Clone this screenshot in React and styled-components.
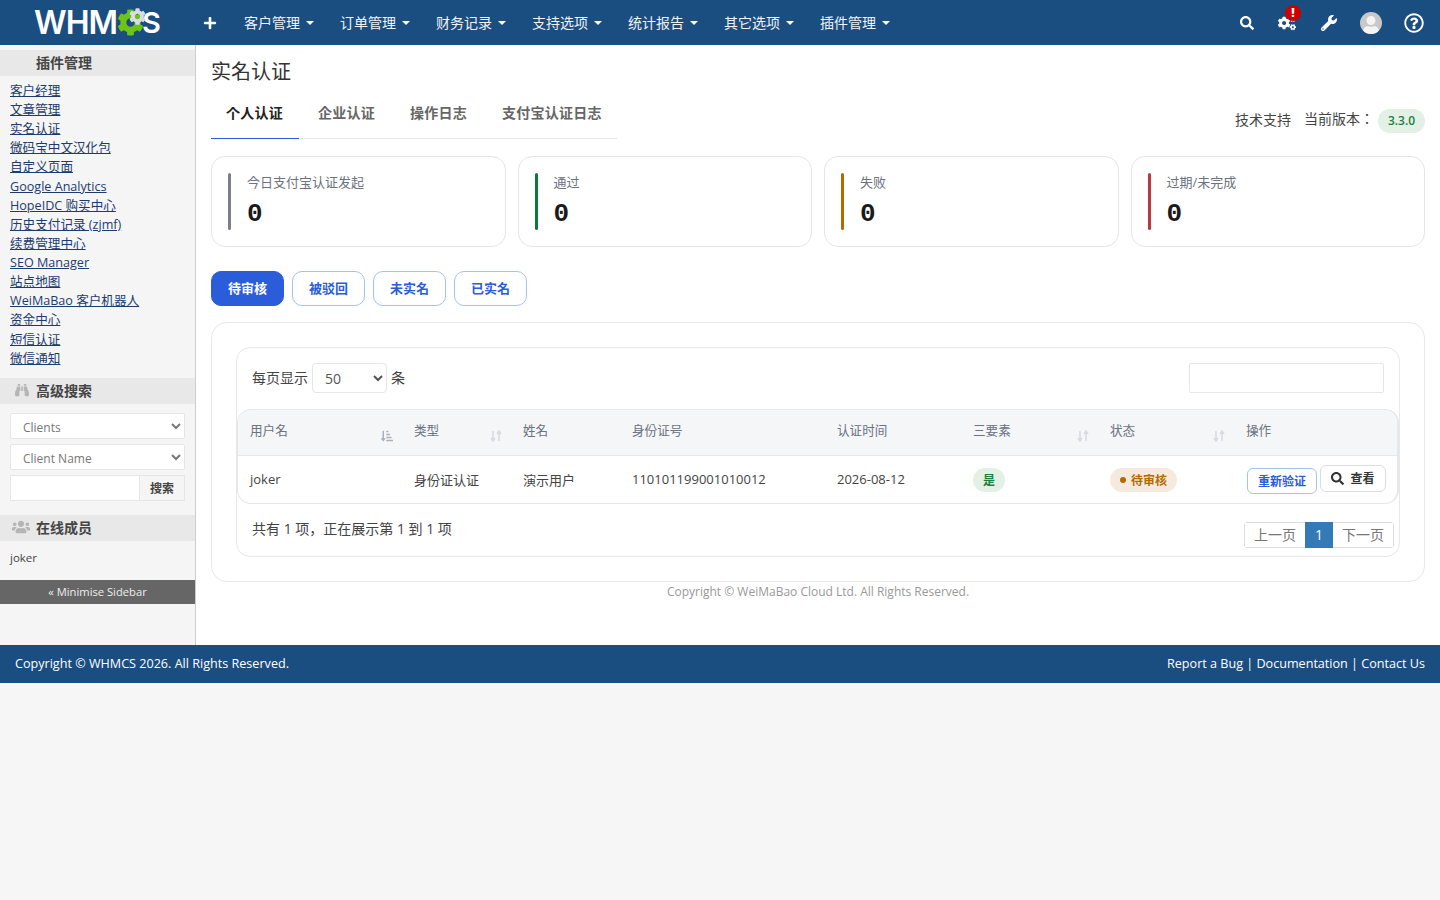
import React from "react";
import styled, { createGlobalStyle } from "styled-components";
import {
  FaPlus,
  FaSearch,
  FaCogs,
  FaCog,
  FaWrench,
  FaRegQuestionCircle,
  FaBinoculars,
  FaUsers,
  FaUser,
  FaSortAmountDownAlt,
} from "react-icons/fa";

const sans = `"Open Sans", "Noto Sans CJK JP", sans-serif`;

const GlobalStyle = createGlobalStyle`
  html, body {
    margin: 0;
    padding: 0;
    background: #f6f6f6;
    font-family: ${sans};
    font-size: 14px;
    color: #333;
  }
  * { box-sizing: border-box; }
`;

/* top bar */
const TopBar = styled.header`
  height: 45px;
  background: #1a4d80;
  display: flex;
  align-items: center;
  color: #fff;
`;

const Logo = styled.div`
  position: relative;
  width: 196px;
  height: 45px;
  padding: 4px 0 0 34px;
  display: flex;
  font-family: Inter, sans-serif;
  font-size: 32px;
  font-weight: 600;
  line-height: 38px;
  letter-spacing: -1px;
`;

const LogoGap = styled.span`
  width: 25px;
`;

const LogoTail = styled.span`
  font-size: 29px;
`;

const LogoGear = styled.span`
  position: absolute;
  left: ${(p) => p.$left}px;
  top: ${(p) => p.$top}px;
  color: ${(p) => p.$color};
  font-size: ${(p) => p.$size}px;
  line-height: 0;
`;

const PlusLink = styled.span`
  width: 35px;
  display: flex;
  justify-content: center;
  font-size: 14px;
  margin-left: -4px;
`;

const NavMenu = styled.nav`
  display: flex;
  padding: 0 0 2px 4px;
`;

const NavItem = styled.span`
  width: 96px;
  padding-left: 13px;
  display: flex;
  align-items: center;
  gap: 6px;
  font-size: 14px;
  color: #f0f3f7;
`;

const Caret = styled.i`
  width: 0;
  height: 0;
  border-left: 4px solid transparent;
  border-right: 4px solid transparent;
  border-top: 4px solid #fff;
  margin-top: 2px;
`;

const TopIcons = styled.div`
  margin-left: auto;
  padding-right: 3px;
  display: flex;
  align-items: center;
  font-size: 16px;
`;

const TopIcon = styled.span`
  position: relative;
  display: flex;
  justify-content: center;
  align-items: center;
  width: ${(p) => p.$w}px;
  font-size: ${(p) => p.$size || 16}px;
`;

const AlertBadge = styled.b`
  position: absolute;
  top: -9px;
  left: 18px;
  width: 16px;
  height: 16px;
  border-radius: 50%;
  background: #cc0000;
  font-size: 12px;
  line-height: 16px;
  font-weight: 800;
  text-align: center;
  color: #fff;
`;

const Avatar = styled.span`
  width: 22px;
  height: 22px;
  border-radius: 50%;
  background: #c8c8c8;
  overflow: hidden;
  display: flex;
  justify-content: center;
  align-items: flex-end;
  color: #f4f4f4;
  font-size: 18px;
  line-height: 0;
`;

/* page frame */
const Frame = styled.div`
  display: flex;
  height: 600px;
`;

const Sidebar = styled.aside`
  width: 196px;
  flex: none;
  background: #f5f5f5;
  border-right: 1px solid #ccc;
  padding-top: 5px;
`;

const SideHeader = styled.h3`
  margin: 0;
  height: 26px;
  padding-bottom: 2px;
  background: #e8e8e8;
  display: flex;
  align-items: center;
  font-size: 14px;
  font-weight: 700;
  color: #444;
`;

const SideIcon = styled.span`
  width: 36px;
  display: flex;
  justify-content: center;
  padding-left: ${(p) => p.$pad ?? 7}px;
  color: #b5b5b5;
  font-size: ${(p) => p.$size || 14}px;
`;

const SideLinks = styled.div`
  padding: 4.9px 10px 10.3px;
  display: flex;
  flex-direction: column;
`;

const SideLink = styled.a`
  height: 19.13px;
  line-height: 19px;
  font-size: 12.6px;
  color: #1c3c6e;
  text-decoration: underline;
  white-space: nowrap;
`;

const SideForm = styled.div`
  padding: 9px 10px 14px;
  display: flex;
  flex-direction: column;
  gap: 5px;
`;

const SideSelect = styled.select`
  width: 175px;
  height: 26px;
  border: 1px solid #e6e6e6;
  border-radius: 2px;
  background: #fff;
  padding: 2px 0 0 8px;
  font-family: ${sans};
  font-size: 12px;
  color: #777;
`;

const SideSearch = styled.div`
  display: flex;
  height: 26px;
`;

const SideInput = styled.input`
  width: 130px;
  border: 1px solid #e6e6e6;
  background: #fff;
  padding: 0;
`;

const SideButton = styled.button`
  width: 45px;
  border: 1px solid #e6e6e6;
  border-left: 0;
  background: #f5f5f5;
  padding: 0;
  font-family: ${sans};
  font-size: 12px;
  font-weight: 700;
  color: #444;
`;

const OnlineName = styled.div`
  padding: 9px 10px 14px;
  font-size: 11.5px;
  line-height: 16px;
  color: #444;
`;

const MinimiseBar = styled.div`
  height: 24px;
  background: #666;
  color: #eee;
  font-size: 11.2px;
  line-height: 24px;
  text-align: center;
`;

/* main content */
const Main = styled.main`
  flex: 1;
  min-width: 0;
  background: #fff;
  padding: 12px 15px 0;
`;

const Title = styled.h1`
  margin: 0;
  height: 29px;
  font-size: 20px;
  line-height: 29px;
  font-weight: 400;
  color: #333;
`;

const TabRow = styled.div`
  display: flex;
  align-items: flex-end;
  justify-content: space-between;
  margin-top: 10px;
`;

const Tabs = styled.div`
  width: 406px;
  height: 43px;
  display: flex;
  gap: 4px;
  border-bottom: 1px solid #e5e5e5;
`;

const Tab = styled.span`
  height: 43px;
  padding: 0 16px 0 15px;
  font-size: 14px;
  letter-spacing: 0.25px;
  line-height: 33px;
  font-weight: 700;
  color: ${(p) => (p.$active ? "#222" : "#666")};
  border-bottom: ${(p) => (p.$active ? "1px solid #2b5cd9" : "0")};
  white-space: nowrap;
`;

const VersionInfo = styled.div`
  display: flex;
  align-items: center;
  height: 24px;
  margin-bottom: 6px;
  font-size: 14px;
  color: #444;
`;

const SupportLink = styled.span`
  margin-right: 13px;
  padding-bottom: 4px;
`;

const VersionLabel = styled.span`
  padding-bottom: 6px;
`;

const VersionBadge = styled.span`
  margin-left: 4px;
  width: 47px;
  height: 24px;
  border-radius: 12px;
  background: #e3f0e6;
  color: #1a7f3c;
  font-size: 12px;
  font-weight: 600;
  line-height: 24px;
  text-align: center;
`;

const StatGrid = styled.div`
  display: grid;
  grid-template-columns: repeat(4, 1fr);
  gap: 12px;
  margin-top: 17px;
`;

const StatCard = styled.div`
  height: 91px;
  border: 1px solid #e2e5ea;
  border-radius: 14px;
  padding: 16px;
  display: flex;
  gap: 16px;
`;

const StatBar = styled.span`
  width: 3px;
  height: 57px;
  border-radius: 2px;
  background: ${(p) => p.$color};
`;

const StatBody = styled.div`
  display: flex;
  flex-direction: column;
`;

const StatLabel = styled.span`
  font-size: 13px;
  line-height: 20px;
  margin-top: -1px;
  color: #6b7280;
`;

const StatValue = styled.span`
  margin-top: 8px;
  font-family: "Liberation Mono", monospace;
  font-size: 26px;
  line-height: 28px;
  font-weight: 700;
  color: #1a1a1a;
`;

const FilterRow = styled.div`
  display: flex;
  gap: 8px;
  margin-top: 24px;
`;

const FilterButton = styled.button`
  width: 73px;
  height: 35px;
  border-radius: 10px;
  border: 1px solid ${(p) => (p.$active ? "#2b5cd9" : "#a8c0f0")};
  background: ${(p) => (p.$active ? "#2b5cd9" : "#fff")};
  color: ${(p) => (p.$active ? "#fff" : "#2b5cd9")};
  font-family: ${sans};
  font-size: 13px;
  font-weight: 700;
  padding: 0 0 2px;
`;

const OuterCard = styled.section`
  margin-top: 16px;
  height: 260px;
  border: 1px solid #e8e8e8;
  border-radius: 16px;
  padding: 24px;
`;

const InnerCard = styled.div`
  height: 210px;
  border: 1px solid #e8e8e8;
  border-radius: 14px;
  padding-top: 15px;
`;

const ListTools = styled.div`
  display: flex;
  justify-content: space-between;
  padding: 0 15px;
  height: 30px;
`;

const LengthPicker = styled.label`
  display: flex;
  align-items: center;
  gap: 4px;
  font-size: 14px;
  color: #444;
`;

const LengthText = styled.span`
  padding-bottom: 2px;
`;

const LengthSelect = styled.select`
  width: 75px;
  height: 30px;
  border: 1px solid #e6e6e6;
  border-radius: 4px;
  background: #fff;
  padding-left: 8px;
  font-family: ${sans};
  font-size: 14px;
  color: #555;
`;

const SearchBox = styled.input`
  width: 195px;
  height: 30px;
  border: 1px solid #e6e6e6;
  border-radius: 2px;
`;

const TableWrap = styled.div`
  margin-top: 16px;
  border: 1px solid #e5e7eb;
  border-right-width: 2px;
  border-radius: 14px;
  overflow: hidden;
`;

const Table = styled.table`
  width: 100%;
  border-collapse: collapse;
  table-layout: fixed;
`;

const Col = styled.col`
  width: ${(p) => p.$w}px;
`;

const Th = styled.th`
  height: 45px;
  padding: 0 9px 0 12px;
  background: #f5f6f8;
  border-bottom: 1px solid #e5e7eb;
  font-size: 12.6px;
  font-weight: 400;
  color: #6b7280;
  text-align: left;
`;

const ThInner = styled.div`
  display: flex;
  justify-content: space-between;
  align-items: flex-start;
  height: 18px;
  margin-top: -7px;
`;

const SortMark = styled.span`
  margin-top: 10px;
  display: flex;
  color: ${(p) => (p.$on ? "#aab0b8" : "#d8dbe0")};
  font-size: 12px;
  line-height: 0;
`;

const Td = styled.td`
  height: 48px;
  padding: 0 0 0 12px;
  font-size: 13px;
  color: #444;
  white-space: nowrap;
`;

const Pill = styled.span`
  display: inline-flex;
  align-items: center;
  justify-content: center;
  gap: 5px;
  height: 24px;
  margin-top: 1px;
  padding: 1px 10px 0;
  border-radius: 12px;
  vertical-align: middle;
  font-size: 12px;
  font-weight: 600;
  background: ${(p) => p.$bg};
  color: ${(p) => p.$color};
`;

const Dot = styled.i`
  width: 6px;
  height: 6px;
  border-radius: 50%;
  background: currentColor;
`;

const Actions = styled.div`
  display: flex;
  align-items: flex-start;
  gap: 3px;
  margin-left: 1px;
`;

const RecheckButton = styled.button`
  width: 70px;
  height: 26px;
  margin-top: 3px;
  border: 1px solid #a8c0f0;
  border-radius: 6px;
  background: #fff;
  color: #2b5cd9;
  font-family: ${sans};
  font-size: 12px;
  font-weight: 600;
  padding: 0;
`;

const ViewButton = styled.button`
  width: 66px;
  height: 27px;
  border: 1px solid #ddd;
  border-radius: 6px;
  background: #fff;
  color: #333;
  font-family: ${sans};
  font-size: 12px;
  font-weight: 700;
  padding: 0;
  display: flex;
  align-items: center;
  justify-content: center;
  gap: 6px;

  svg { font-size: 13px; }
`;

const ListFoot = styled.div`
  display: flex;
  justify-content: space-between;
  padding: 0 5px 0 15px;
`;

const Summary = styled.span`
  margin-top: 15px;
  font-size: 14px;
  line-height: 20px;
  color: #444;
`;

const Pager = styled.div`
  margin-top: 18px;
  display: flex;
  height: 26px;
  border: 1px solid #ddd;
  border-radius: 3px;
`;

const PageItem = styled.span`
  width: ${(p) => p.$w}px;
  margin: ${(p) => (p.$active ? "-1px 0" : "0")};
  text-align: center;
  font-size: 14px;
  line-height: ${(p) => (p.$active ? "26px" : "24px")};
  color: ${(p) => (p.$active ? "#fff" : "#777")};
  background: ${(p) => (p.$active ? "#337ab7" : "#fff")};
`;

const Copyright = styled.div`
  margin-top: 1px;
  text-align: center;
  font-size: 12px;
  line-height: 18px;
  color: #999;
`;

const Footer = styled.footer`
  height: 38px;
  background: #1a4d80;
  padding: 0 15px 1px;
  display: flex;
  align-items: center;
  justify-content: space-between;
  font-size: 12.6px;
  color: #fff;
`;

const sideLinks = [
  "客户经理", "文章管理", "实名认证", "微码宝中文汉化包", "自定义页面", "Google Analytics",
  "HopeIDC 购买中心", "历史支付记录 (zjmf)", "续费管理中心", "SEO Manager", "站点地图",
  "WeiMaBao 客户机器人", "资金中心", "短信认证", "微信通知",
];
const navItems = ["客户管理", "订单管理", "财务记录", "支持选项", "统计报告", "其它选项", "插件管理"];
const stats = [
  { label: "今日支付宝认证发起", color: "#7c7f87" },
  { label: "通过", color: "#0a7a3b" },
  { label: "失败", color: "#b36b00" },
  { label: "过期/未完成", color: "#b93a3a" },
];
const columns = [
  { title: "用户名", w: 164, sort: "on" },
  { title: "类型", w: 109, sort: "off" },
  { title: "姓名", w: 109 },
  { title: "身份证号", w: 205 },
  { title: "认证时间", w: 136 },
  { title: "三要素", w: 137, sort: "off" },
  { title: "状态", w: 136, sort: "off" },
  { title: "操作", w: 163 },
];

const SortArrows = () => (
  <svg width="12" height="12" viewBox="0 0 12 12" fill="none" stroke="currentColor" strokeWidth="1.6">
    <path d="M3 1v9M1 8l2 3 2-3M9 11V2M7 4l2-3 2 3" />
  </svg>
);

export default function App() {
  return (
    <>
      <GlobalStyle />
      <TopBar>
        <Logo>
          WHM
          <LogoGap />
          <LogoTail>S</LogoTail>
          <LogoGear $left={117} $top={9} $size={27} $color="#6cc417"><FaCog /></LogoGear>
          <LogoGear $left={129} $top={8} $size={17} $color="#d9dde2"><FaCog /></LogoGear>
        </Logo>
        <PlusLink><FaPlus /></PlusLink>
        <NavMenu>
          {navItems.map((item) => (
            <NavItem key={item}>{item}<Caret /></NavItem>
          ))}
        </NavMenu>
        <TopIcons>
          <TopIcon $w={40} $size={14}><FaSearch /></TopIcon>
          <TopIcon $w={40} $size={18}><FaCogs /><AlertBadge>!</AlertBadge></TopIcon>
          <TopIcon $w={44}><FaWrench /></TopIcon>
          <TopIcon $w={40}><Avatar><FaUser /></Avatar></TopIcon>
          <TopIcon $w={46} $size={20}><FaRegQuestionCircle /></TopIcon>
        </TopIcons>
      </TopBar>
      <Frame>
        <Sidebar>
          <SideHeader><SideIcon />插件管理</SideHeader>
          <SideLinks>
            {sideLinks.map((link) => <SideLink key={link}>{link}</SideLink>)}
          </SideLinks>
          <SideHeader><SideIcon><FaBinoculars /></SideIcon>高级搜索</SideHeader>
          <SideForm>
            <SideSelect><option>Clients</option></SideSelect>
            <SideSelect><option>Client Name</option></SideSelect>
            <SideSearch>
              <SideInput />
              <SideButton>搜索</SideButton>
            </SideSearch>
          </SideForm>
          <SideHeader><SideIcon $size={18} $pad={6}><FaUsers /></SideIcon>在线成员</SideHeader>
          <OnlineName>joker</OnlineName>
          <MinimiseBar>« Minimise Sidebar</MinimiseBar>
        </Sidebar>
        <Main>
          <Title>实名认证</Title>
          <TabRow>
            <Tabs>
              <Tab $active>个人认证</Tab>
              <Tab>企业认证</Tab>
              <Tab>操作日志</Tab>
              <Tab>支付宝认证日志</Tab>
            </Tabs>
            <VersionInfo>
              <SupportLink>技术支持</SupportLink>
              <VersionLabel>当前版本：</VersionLabel>
              <VersionBadge>3.3.0</VersionBadge>
            </VersionInfo>
          </TabRow>
          <StatGrid>
            {stats.map((s) => (
              <StatCard key={s.label}>
                <StatBar $color={s.color} />
                <StatBody>
                  <StatLabel>{s.label}</StatLabel>
                  <StatValue>0</StatValue>
                </StatBody>
              </StatCard>
            ))}
          </StatGrid>
          <FilterRow>
            <FilterButton $active>待审核</FilterButton>
            <FilterButton>被驳回</FilterButton>
            <FilterButton>未实名</FilterButton>
            <FilterButton>已实名</FilterButton>
          </FilterRow>
          <OuterCard>
            <InnerCard>
              <ListTools>
                <LengthPicker>
                  <LengthText>每页显示</LengthText>
                  <LengthSelect><option>50</option></LengthSelect>
                  <LengthText>条</LengthText>
                </LengthPicker>
                <SearchBox />
              </ListTools>
              <TableWrap>
                <Table>
                  <colgroup>
                    {columns.map((c) => <Col key={c.title} $w={c.w} />)}
                  </colgroup>
                  <thead>
                    <tr>
                      {columns.map((c) => (
                        <Th key={c.title}>
                          <ThInner>
                            {c.title}
                            {c.sort === "on" && <SortMark $on><FaSortAmountDownAlt /></SortMark>}
                            {c.sort === "off" && <SortMark><SortArrows /></SortMark>}
                          </ThInner>
                        </Th>
                      ))}
                    </tr>
                  </thead>
                  <tbody>
                    <tr>
                      <Td>joker</Td>
                      <Td>身份证认证</Td>
                      <Td>演示用户</Td>
                      <Td>110101199001010012</Td>
                      <Td>2026-08-12</Td>
                      <Td><Pill $bg="#e3f0e6" $color="#1a7f3c">是</Pill></Td>
                      <Td><Pill $bg="#f6eadf" $color="#b36b00"><Dot />待审核</Pill></Td>
                      <Td>
                        <Actions>
                          <RecheckButton>重新验证</RecheckButton>
                          <ViewButton><FaSearch />查看</ViewButton>
                        </Actions>
                      </Td>
                    </tr>
                  </tbody>
                </Table>
              </TableWrap>
              <ListFoot>
                <Summary>共有 1 项，正在展示第 1 到 1 项</Summary>
                <Pager>
                  <PageItem $w={60}>上一页</PageItem>
                  <PageItem $w={28} $active>1</PageItem>
                  <PageItem $w={60}>下一页</PageItem>
                </Pager>
              </ListFoot>
            </InnerCard>
          </OuterCard>
          <Copyright>Copyright © WeiMaBao Cloud Ltd. All Rights Reserved.</Copyright>
        </Main>
      </Frame>
      <Footer>
        <span>Copyright © WHMCS 2026. All Rights Reserved.</span>
        <span>Report a Bug | Documentation | Contact Us</span>
      </Footer>
    </>
  );
}
